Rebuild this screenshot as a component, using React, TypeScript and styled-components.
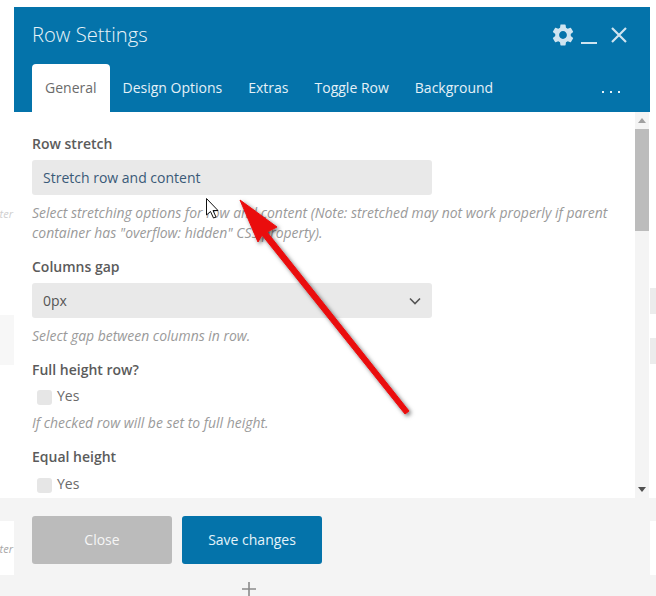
import React from "react";
import styled, { createGlobalStyle } from "styled-components";
import { MdSettings } from "react-icons/md";

const Global = createGlobalStyle`
  html, body { margin: 0; padding: 0; background: #fff; }
  * { box-sizing: border-box; }
`;

const Page = styled.div`
  position: relative;
  width: 656px;
  height: 596px;
  overflow: hidden;
  background: #fff;
  font-family: "Open Sans", "Noto Sans", sans-serif;
  padding: 7px 6px 0 14px;
`;

const BackdropBand = styled.div`
  position: absolute;
  left: 0;
  right: 0;
  top: 498px;
  bottom: 0;
  background: #f4f4f4;
`;

const BackdropCard = styled.div<{ $side: "left" | "right"; $top: number; $height: number; $bg: string }>`
  position: absolute;
  ${(p) => (p.$side === "left" ? "left: 0; width: 14px;" : "right: 0; width: 6px;")}
  top: ${(p) => p.$top}px;
  height: ${(p) => p.$height}px;
  background: ${(p) => p.$bg};
  overflow: hidden;
`;

const BackdropHint = styled.span<{ $color: string }>`
  position: absolute;
  right: 1px;
  top: 50%;
  transform: translateY(-50%);
  font-size: 11px;
  font-style: italic;
  color: ${(p) => p.$color};
`;

const Modal = styled.div`
  position: relative;
  width: 636px;
  display: flex;
  flex-direction: column;
`;

const Header = styled.header`
  height: 105px;
  background: #0473aa;
  color: #e4f1f8;
  display: flex;
  flex-direction: column;
  justify-content: space-between;
`;

const TitleRow = styled.div`
  height: 57px;
  padding: 0 23px 0 18px;
  display: flex;
  align-items: center;
  justify-content: space-between;
`;

const Title = styled.h1`
  margin: 0 0 3px;
  font-size: 20.2px;
  font-weight: 300;
  line-height: 28px;
  color: #e8f3f9;
`;

const Controls = styled.div`
  display: flex;
  align-items: center;
  gap: 5px;
  color: #cfe4f0;
  margin-top: -1px;
`;

const Tabs = styled.nav`
  height: 48px;
  padding: 0 0 0 18px;
  display: flex;
  align-items: stretch;
`;

const Tab = styled.div<{ $active?: boolean }>`
  padding: 0 13px 2px;
  display: flex;
  align-items: center;
  font-size: 14px;
  border-radius: 4px 4px 0 0;
  background: ${(p) => (p.$active ? "#fff" : "transparent")};
  color: ${(p) => (p.$active ? "#6b6b6b" : "#e4f1f8")};
`;

const MoreDots = styled.div`
  margin-left: auto;
  margin-right: 30px;
  display: flex;
  align-items: center;
  gap: 6px;
  padding-top: 8px;
`;

const Dot = styled.i`
  width: 2px;
  height: 2px;
  background: #e4f1f8;
  display: block;
`;

const Body = styled.div`
  height: 386px;
  background: #fff;
  display: flex;
  padding-right: 1px;
`;

const Content = styled.div`
  flex: 1;
  overflow: hidden;
  padding: 22px 0 0 18px;
`;

const Scrollbar = styled.div`
  width: 14px;
  background: #f4f4f4;
  position: relative;
`;

const ScrollArrow = styled.svg<{ $pos: "top" | "bottom" }>`
  position: absolute;
  left: 3px;
  ${(p) => (p.$pos === "top" ? "top: 6px;" : "bottom: 6px;")}
`;

const Thumb = styled.div`
  position: absolute;
  left: 0;
  right: 0;
  top: 17px;
  height: 102px;
  background: #bcbcbc;
`;

const Field = styled.section`
  margin-bottom: 14px;
`;

const Label = styled.div`
  font-size: 14px;
  font-weight: 600;
  line-height: 20px;
  color: #5b5b5b;
  margin-bottom: 6px;
`;

const SelectBox = styled.div<{ $blue?: boolean }>`
  width: 400px;
  height: 35px;
  border-radius: 3px;
  background: #e9e9e9;
  padding: 0 11px;
  display: flex;
  align-items: center;
  justify-content: space-between;
  font-size: 14px;
  color: ${(p) => (p.$blue ? "#3a5a78" : "#555")};
`;

const Help = styled.p<{ $tight?: boolean }>`
  margin: ${(p) => (p.$tight ? "7px" : "8px")} 0 0;
  width: 590px;
  font-size: 13.95px;
  font-style: italic;
  line-height: 20px;
  color: #9a9a9a;
`;

const CheckRow = styled.label<{ $low?: boolean }>`
  display: flex;
  align-items: center;
  gap: 5px;
  padding-left: 5px;
  padding-top: ${(p) => (p.$low ? "1px" : "0")};
  font-size: 14px;
  line-height: 20px;
  color: #6a6a6a;
`;

const CheckBox = styled.span`
  width: 15px;
  height: 15px;
  margin-top: 2px;
  border-radius: 3px;
  background: #e6e6e6;
  display: block;
`;

const Footer = styled.footer`
  height: 82px;
  background: #f4f4f4;
  padding: 18px 18px;
  display: flex;
  gap: 10px;
  align-items: flex-start;
`;

const Button = styled.button<{ $primary?: boolean }>`
  width: 140px;
  height: 48px;
  border: 0;
  border-radius: 3px;
  padding: 0 0 1px;
  font-family: inherit;
  font-size: 14px;
  background: ${(p) => (p.$primary ? "#0473aa" : "#bbbbbb")};
  color: ${(p) => (p.$primary ? "#e4f3fa" : "#f6f6f6")};
`;

const AddRow = styled.div`
  position: relative;
  padding: 2px 0 0 228px;
  color: #8a8a8a;
  display: flex;
`;

const Overlay = styled.svg`
  position: absolute;
  left: 0;
  top: 0;
  pointer-events: none;
`;

export default function App() {
  return (
    <>
      <Global />
      <Page>
        <BackdropBand />
        <BackdropCard $side="left" $top={315} $height={50} $bg="#f7f7f7" />
        <BackdropCard $side="left" $top={198} $height={30} $bg="#fff">
          <BackdropHint $color="#cfcfcf">ter</BackdropHint>
        </BackdropCard>
        <BackdropCard $side="left" $top={521} $height={54} $bg="#fff">
          <BackdropHint $color="#a8a8a8">ter</BackdropHint>
        </BackdropCard>
        <BackdropCard $side="right" $top={288} $height={26} $bg="#ececec" />
        <BackdropCard $side="right" $top={338} $height={26} $bg="#ececec" />
        <BackdropCard $side="right" $top={521} $height={54} $bg="#fff" />
        <Modal>
          <Header>
            <TitleRow>
              <Title>Row Settings</Title>
              <Controls>
                <MdSettings size={26} />
                <svg width="16" height="22" viewBox="0 0 16 22">
                  <rect x="0" y="18" width="16" height="2" fill="currentColor" />
                </svg>
                <svg width="16" height="16" viewBox="0 0 16 16" style={{ marginLeft: 9 }}>
                  <path d="M1 1 L15 15 M15 1 L1 15" stroke="currentColor" strokeWidth="2.2" fill="none" />
                </svg>
              </Controls>
            </TitleRow>
            <Tabs>
              <Tab $active>General</Tab>
              <Tab>Design Options</Tab>
              <Tab>Extras</Tab>
              <Tab>Toggle Row</Tab>
              <Tab>Background</Tab>
              <MoreDots>
                <Dot />
                <Dot />
                <Dot />
              </MoreDots>
            </Tabs>
          </Header>
          <Body>
            <Content>
              <Field>
                <Label>Row stretch</Label>
                <SelectBox $blue>Stretch row and content</SelectBox>
                <Help>
                  Select stretching options for row and content (Note: stretched may not work properly if parent
                  container has "overflow: hidden" CSS property).
                </Help>
              </Field>
              <Field>
                <Label>Columns gap</Label>
                <SelectBox>
                  0px
                  <svg width="12" height="8" viewBox="0 0 12 8">
                    <path d="M1 1.5 L6 6.5 L11 1.5" stroke="#555" strokeWidth="1.6" fill="none" />
                  </svg>
                </SelectBox>
                <Help>Select gap between columns in row.</Help>
              </Field>
              <Field>
                <Label>Full height row?</Label>
                <CheckRow>
                  <CheckBox />
                  Yes
                </CheckRow>
                <Help $tight>If checked row will be set to full height.</Help>
              </Field>
              <Field>
                <Label>Equal height</Label>
                <CheckRow $low>
                  <CheckBox />
                  Yes
                </CheckRow>
              </Field>
            </Content>
            <Scrollbar>
              <ScrollArrow $pos="top" width="8" height="5" viewBox="0 0 8 5">
                <path d="M0 5 L4 0 L8 5 Z" fill="#a0a0a0" />
              </ScrollArrow>
              <Thumb />
              <ScrollArrow $pos="bottom" width="8" height="5" viewBox="0 0 8 5">
                <path d="M0 0 L8 0 L4 5 Z" fill="#505050" />
              </ScrollArrow>
            </Scrollbar>
          </Body>
          <Footer>
            <Button>Close</Button>
            <Button $primary>Save changes</Button>
          </Footer>
        </Modal>
        <AddRow>
          <svg width="14" height="14" viewBox="0 0 14 14">
            <path d="M7 0 V14 M0 7 H14" stroke="currentColor" strokeWidth="1.6" />
          </svg>
        </AddRow>
        <Overlay width="656" height="596" viewBox="0 0 656 596">
          <defs>
            <filter id="arrowShadow" x="-30%" y="-30%" width="160%" height="160%">
              <feDropShadow dx="2" dy="2" stdDeviation="2" floodColor="#000" floodOpacity="0.55" />
            </filter>
          </defs>
          <g filter="url(#arrowShadow)">
            <path
              d="M240 200 L277 227 L267 232 L409 411 L405 414 L262 235 L258 242 Z"
              fill="#ea0a10"
              stroke="#ea0a10"
              strokeLinejoin="round"
              strokeWidth="1"
            />
          </g>
          <path
            d="M206.5 198.5 V215 L210.5 211.5 L213.5 218 L216 217 L213 210.5 L218 210.5 Z"
            fill="#fff"
            stroke="#111"
            strokeWidth="1"
          />
        </Overlay>
      </Page>
    </>
  );
}
